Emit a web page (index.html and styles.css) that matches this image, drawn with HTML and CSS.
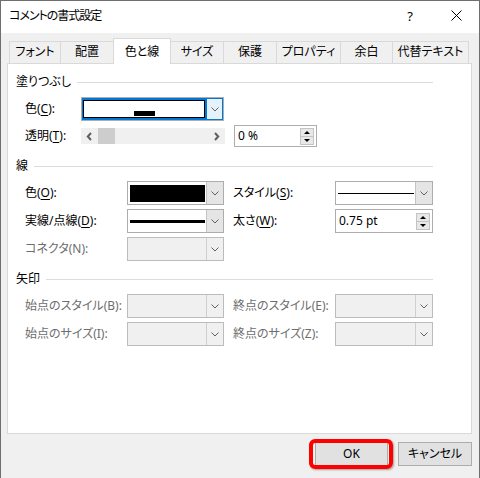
FILE: index.html
```html
<!DOCTYPE html>
<html lang="ja">
<head>
<meta charset="utf-8">
<title>コメントの書式設定</title>
<link rel="stylesheet" href="styles.css">
</head>
<body>
<div class="window">
  <div class="titlebar">
    <span class="title">コメントの書式設定</span>
    <span class="help">?</span>
    <span class="close"><svg width="11" height="11" viewBox="0 0 11 11"><path d="M0.5 0.5L10.5 10.5M10.5 0.5L0.5 10.5" stroke="#000" stroke-width="1" fill="none"/></svg></span>
  </div>
  <div class="tabs">
    <div class="tab t1">フォント</div>
    <div class="tab t2">配置</div>
    <div class="tab t3 sel">色と線</div>
    <div class="tab t4">サイズ</div>
    <div class="tab t5">保護</div>
    <div class="tab t6">プロパティ</div>
    <div class="tab t7">余白</div>
    <div class="tab t8">代替テキスト</div>
  </div>
  <div class="panel">
    <div class="group-head g1"><span>塗りつぶし</span><i class="rule"></i></div>
    <div class="fill-row r-first">
      <span class="lbl lbl-fill">色(<u>C</u>):</span>
      <div class="combo focus wide">
        <div class="val"><div class="swatch"><span class="bar"></span></div></div>
        <div class="drop"></div>
      </div>
    </div>
    <div class="fill-row r-trans">
      <span class="lbl lbl-fill">透明(<u>T</u>):</span>
      <div class="scroll">
        <span class="arr left"></span>
        <span class="thumb"></span>
        <span class="track"></span>
        <span class="arr right"></span>
      </div>
      <div class="spin pct">
        <span class="txt">0 %</span>
        <span class="updown"><span class="ud up"></span><span class="ud down"></span></span>
      </div>
    </div>

    <div class="group-head g2"><span>線</span><i class="rule"></i></div>
    <div class="grid">
      <span class="lbl">色(<u>O</u>):</span>
      <div class="combo">
        <div class="val"><span class="black"></span></div>
        <div class="drop"></div>
      </div>
      <span class="lbl lbl2">スタイル(<u>S</u>):</span>
      <div class="combo">
        <div class="val"><span class="thin"></span></div>
        <div class="drop"></div>
      </div>

      <span class="lbl">実線/点線(<u>D</u>):</span>
      <div class="combo">
        <div class="val"><span class="thick"></span></div>
        <div class="drop"></div>
      </div>
      <span class="lbl lbl2">太さ(<u>W</u>):</span>
      <div class="spin">
        <span class="txt">0.75 pt</span>
        <span class="updown"><span class="ud up"></span><span class="ud down"></span></span>
      </div>

      <span class="lbl dis">コネクタ(N):</span>
      <div class="combo disabled">
        <div class="val"></div>
        <div class="drop"></div>
      </div>
    </div>

    <div class="group-head g3"><span>矢印</span><i class="rule"></i></div>
    <div class="grid">
      <span class="lbl dis">始点のスタイル(B):</span>
      <div class="combo disabled"><div class="val"></div><div class="drop"></div></div>
      <span class="lbl lbl2 dis">終点のスタイル(E):</span>
      <div class="combo disabled"><div class="val"></div><div class="drop"></div></div>

      <span class="lbl dis">始点のサイズ(I):</span>
      <div class="combo disabled"><div class="val"></div><div class="drop"></div></div>
      <span class="lbl lbl2 dis">終点のサイズ(Z):</span>
      <div class="combo disabled"><div class="val"></div><div class="drop"></div></div>
    </div>
  </div>
  <div class="buttons">
    <div class="btn ok">OK</div>
    <div class="btn cancel">キャンセル</div>
  </div>
</div>
</body>
</html>
```
FILE: styles.css
```css
* { box-sizing: border-box; }
html, body { margin: 0; padding: 0; }
body {
  width: 480px;
  height: 478px;
  overflow: hidden;
  font-family: "Noto Sans", "Noto Sans CJK JP", sans-serif;
  font-size: 12px;
  font-feature-settings: "palt";
  color: #000;
  background: #f0f0f0;
}
u { text-decoration: underline; text-underline-offset: 2px; }

.window {
  width: 480px;
  height: 478px;
  border: 1px solid #6f6f6f;
  border-bottom: none;
  background: #f0f0f0;
  display: flex;
  flex-direction: column;
}

/* title bar */
.titlebar {
  height: 32px;
  flex: none;
  background: #fff;
  display: flex;
  align-items: center;
  padding: 0 0 3px 8px;
}
.title { line-height: 18px; letter-spacing: -1px; }
.help {
  margin-left: auto;
  width: 30px;
  margin-right: 8px;
  text-align: center;
  font-size: 13px;
  line-height: 18px;
}
.close {
  width: 46px;
  display: flex;
  justify-content: center;
  align-items: center;
  height: 18px;
}

/* tabs */
.tabs {
  height: 30px;
  flex: none;
  display: flex;
  align-items: flex-end;
  padding-left: 8px;
}
.tab {
  height: 22px;
  border: 1px solid #d9d9d9;
  border-bottom: none;
  background: #f0f0f0;
  text-align: center;
  line-height: 20px;
  margin-left: -1px;
  white-space: nowrap;
}
.tab.t1 { margin-left: 0; width: 52px; }
.tab.t2 { width: 54px; }
.tab.t3 { width: 58px; }
.tab.t4 { width: 54px; }
.tab.t5 { width: 54px; }
.tab.t6 { width: 65px; }
.tab.t7 { width: 53px; }
.tab.t8 { width: 77px; }
.tab.sel {
  height: 26px;
  background: #fff;
  padding-top: 3px;
  margin-bottom: -1px;
  position: relative;
  z-index: 1;
}

/* panel */
.panel {
  flex: none;
  height: 371px;
  margin: 0 7px 0 6px;
  background: #fff;
  border: 1px solid #d9d9d9;
  padding: 0 38px 0 8px;
}
.group-head {
  height: 18px;
  display: flex;
  align-items: center;
  line-height: 18px;
}
.group-head .rule {
  flex: 1;
  height: 1px;
  background: #dcdcdc;
  margin-left: 6px;
}
.g1 { margin-top: 9px; }
.g2 { margin-top: 10px; }
.g3 { margin-top: 9px; }

.lbl { line-height: 16px; white-space: nowrap; align-self: center; }
.lbl.dis { color: #6d6d6d; }
.lbl2 { padding-left: 9px; }

.fill-row {
  display: flex;
  align-items: center;
  padding-left: 9px;
}
.r-first { margin-top: 6px; height: 24px; }
.r-trans { margin-top: 4px; height: 22px; }
.lbl-fill { width: 56px; }

/* combos */
.combo {
  display: flex;
  height: 24px;
  border: 1px solid #adadad;
  background: #fff;
}
.combo .val {
  flex: 1;
  display: flex;
  align-items: center;
  padding: 0 1px 0 2px;
}
.combo .drop {
  width: 17px;
  flex: none;
  border-left: 1px solid #c4c4c4;
  background: #e5e5e5 url("data:image/svg+xml;utf8,<svg xmlns='http://www.w3.org/2000/svg' width='8' height='5'><path d='M0.5 0.5L4 4L7.5 0.5' fill='none' stroke='%23606060'/></svg>") center 55% no-repeat;
}
.combo.wide { width: 143px; }
.combo.focus .val {
  background: #0078d7;
  padding: 2px 1px 2px 1px;
  align-items: stretch;
}
.swatch {
  flex: 1;
  border: 1px solid #000;
  background: #fff;
  display: flex;
  justify-content: center;
  align-items: flex-end;
  padding-bottom: 1px;
}
.swatch .bar { width: 21px; height: 5px; background: #000; }
.combo.focus .drop {
  width: 17px;
  border: 1px solid #0078d7;
  background-color: #e5f1fb;
}
.combo .black { flex: 1; height: 17px; background: #000; margin-top: 1px; }
.combo .thin { flex: 1; height: 1px; background: #000; }
.combo .thick { flex: 1; height: 3px; background: #000; }
.combo.disabled { background: #f0f0f0; border-color: #bcbcbc; }
.combo.disabled .drop { background-color: #f0f0f0; border-left-color: #cfcfcf; }

/* scroll bar */
.scroll {
  width: 144px;
  height: 16px;
  display: flex;
  background: #f0f0f0;
}
.scroll .arr {
  width: 17px;
  flex: none;
  background-repeat: no-repeat;
  background-position: center;
}
.scroll .arr.left {
  background-image: url("data:image/svg+xml;utf8,<svg xmlns='http://www.w3.org/2000/svg' width='7' height='9'><path d='M5 1L1.8 4.5L5 8' fill='none' stroke='%23606060' stroke-width='2'/></svg>");
}
.scroll .arr.right {
  background-image: url("data:image/svg+xml;utf8,<svg xmlns='http://www.w3.org/2000/svg' width='7' height='9'><path d='M2 1L5.2 4.5L2 8' fill='none' stroke='%23606060' stroke-width='2'/></svg>");
}
.scroll .thumb { width: 17px; flex: none; background: #cdcdcd; }
.scroll .track { flex: 1; }

/* spin boxes */
.spin {
  height: 24px;
  display: flex;
  align-items: center;
  border: 1px solid #adadad;
  background: #fff;
  padding-left: 3px;
}
.spin.pct { width: 83px; height: 22px; margin-left: 9px; }
.spin .txt { flex: 1; line-height: 16px; }
.spin .updown {
  width: 14px;
  height: 17px;
  display: flex;
  flex-direction: column;
  margin-right: 2px;
  border: 1px solid #c4c4c4;
  background: #e8e8e8;
}
.spin .ud {
  flex: 1;
  background-repeat: no-repeat;
  background-position: center;
}
.spin .ud.up {
  border-bottom: 1px solid #c4c4c4;
  background-image: url("data:image/svg+xml;utf8,<svg xmlns='http://www.w3.org/2000/svg' width='6' height='3'><path d='M3 0L6 3H0Z' fill='%23000'/></svg>");
}
.spin .ud.down {
  background-image: url("data:image/svg+xml;utf8,<svg xmlns='http://www.w3.org/2000/svg' width='6' height='3'><path d='M0 0H6L3 3Z' fill='%23000'/></svg>");
}

/* grid sections */
.grid {
  display: grid;
  grid-template-columns: 102px 97px 111px 98px;
  grid-auto-rows: 24px;
  row-gap: 4px;
  margin-top: 6px;
  padding-left: 9px;
}

/* buttons */
.buttons {
  display: flex;
  justify-content: flex-end;
  gap: 10px;
  padding: 8px 7px 0 0;
}
.btn {
  height: 24px;
  background: #e1e1e1;
  border: 1px solid #adadad;
  text-align: center;
  line-height: 22px;
}
.btn.ok { width: 73px; position: relative; }
.btn.cancel { width: 74px; }
.btn.ok::after {
  content: "";
  position: absolute;
  top: -4px;
  bottom: -4px;
  left: -7px;
  right: -6px;
  border: 4px solid #ff0000;
  border-radius: 6px;
  box-shadow: 1px 1px 2px rgba(0,0,0,0.35);
}
```
